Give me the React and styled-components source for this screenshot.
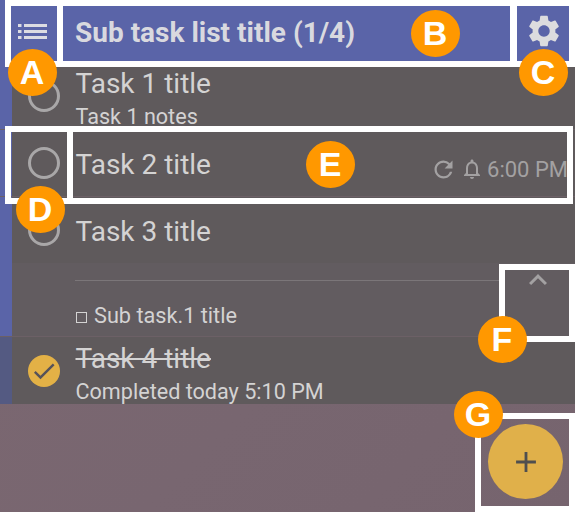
import React from "react";
import styled, { createGlobalStyle } from "styled-components";
import { MdSettings, MdRefresh, MdNotificationsNone, MdCheck, MdAdd, MdKeyboardArrowUp } from "react-icons/md";

const Global = createGlobalStyle`
  html, body { margin: 0; padding: 0; background: #786670; }
  body { font-family: Roboto, "Liberation Sans", sans-serif; }
`;

const Screen = styled.div`
  position: relative;
  width: 575px;
  height: 512px;
  overflow: hidden;
  background: linear-gradient(135deg, #7d6871 0%, #786670 60%, #76646e 100%);
  color: #dddcdc;
`;

const Header = styled.header`
  display: flex;
  align-items: center;
  height: 62px;
  background: #5a64a8;
`;

const HeaderButton = styled.div`
  display: flex;
  align-items: center;
  justify-content: center;
  flex: none;
  width: ${(p) => p.$w}px;
  height: 100%;
`;

const HeaderTitle = styled.h1`
  flex: 1;
  margin: 0;
  padding: 3px 0 0 10px;
  font-size: 28px;
  font-weight: 700;
  line-height: 59px;
  color: #d9d9df;
`;

const List = styled.div`
  display: flex;
  flex-direction: column;
`;

const Row = styled.div`
  padding: ${(p) => (p.$first ? "0" : "1px")} 0 0 12px;
  background: ${(p) => (p.$done ? "#545a82" : "#5a64a8")};
  box-shadow: ${(p) => (p.$first ? "none" : "inset 0 1px 0 #6c6066")};
`;

const RowContent = styled.div`
  background: #5f5a5c;
`;

const RowMain = styled.div`
  display: flex;
  align-items: center;
  height: ${(p) => p.$h}px;
`;

const CheckCell = styled.div`
  display: flex;
  align-items: center;
  justify-content: center;
  flex: none;
  width: 63.5px;
  height: 100%;
`;

const Circle = styled.div`
  box-sizing: border-box;
  width: 32px;
  height: 32px;
  margin-left: 1px;
  border-radius: 50%;
  border: 3px solid #a9a7a8;
`;

const CheckedCircle = styled.div`
  display: flex;
  align-items: center;
  justify-content: center;
  width: 32px;
  height: 32px;
  margin-left: 1px;
  border-radius: 50%;
  background: #e3b146;
  color: #55525a;
`;

const Body = styled.div`
  flex: 1;
  min-width: 0;
  padding-top: ${(p) => (p.$twoLine ? "8px" : "3px")};
`;

const Title = styled.div`
  font-size: 28px;
  line-height: 33px;
  color: #d4d3d3;
  text-decoration: ${(p) => (p.$done ? "line-through" : "none")};
`;

const Notes = styled.div`
  font-size: 21.6px;
  line-height: 33px;
  color: #d4d3d3;
`;

const Meta = styled.div`
  display: flex;
  align-items: center;
  flex: none;
  gap: 3px;
  margin: 12px 7px 0 0;
  font-size: 22px;
  color: #a3a1a2;
`;

const Expansion = styled.div`
  position: relative;
  box-sizing: border-box;
  height: 73px;
  padding: 17px 0 0 63px;
  background: #625c60;
`;

const Divider = styled.div`
  width: 430px;
  height: 1px;
  background: #7b7679;
`;

const SubTask = styled.div`
  display: flex;
  align-items: center;
  gap: 7px;
  margin-top: 22px;
  font-size: 21.7px;
  line-height: 26px;
  color: #d4d3d3;
`;

const SubBox = styled.span`
  box-sizing: border-box;
  width: 11px;
  height: 11px;
  margin: 3px 0 0 1px;
  border: 1.5px solid #d4d3d3;
`;

const Collapse = styled(MdKeyboardArrowUp)`
  position: absolute;
  right: 19px;
  top: -1px;
  color: #a3a1a2;
`;

const Fab = styled.button`
  position: absolute;
  left: 488px;
  top: 424px;
  display: flex;
  align-items: center;
  justify-content: center;
  width: 75px;
  height: 75px;
  padding: 0;
  border: 0;
  border-radius: 50%;
  background: #e0b04a;
  color: #4f4f4f;
`;

const Frame = styled.div`
  position: absolute;
  box-sizing: border-box;
  left: ${(p) => p.$x}px;
  top: ${(p) => p.$y}px;
  width: ${(p) => p.$w}px;
  height: ${(p) => p.$h}px;
  border: 6px solid #fff;
`;

const Badge = styled.div`
  position: absolute;
  left: ${(p) => p.$x - 24.5}px;
  top: ${(p) => p.$y - 23.5}px;
  display: flex;
  align-items: center;
  justify-content: center;
  width: 49px;
  height: 47px;
  border-radius: 50%;
  background: #ff9800;
  color: #fff;
  font-family: "Liberation Sans", Arial, sans-serif;
  font-size: 34px;
  font-weight: 700;
`;

const ListIcon = () => (
  <svg width="29" height="15" viewBox="0 0 29 15" fill="#dcdce2">
    <rect x="0" y="0" width="3.5" height="3" />
    <rect x="6" y="0" width="23" height="3" />
    <rect x="0" y="6" width="3.5" height="3" />
    <rect x="6" y="6" width="23" height="3" />
    <rect x="0" y="12" width="3.5" height="3" />
    <rect x="6" y="12" width="23" height="3" />
  </svg>
);

const frames = [
  { x: 5, y: 0, w: 58, h: 67 },
  { x: 57, y: 0, w: 460, h: 67 },
  { x: 510, y: 0, w: 65, h: 67 },
  { x: 5, y: 126, w: 68, h: 78 },
  { x: 67, y: 126, w: 506, h: 78 },
  { x: 499, y: 264, w: 76, h: 78 },
  { x: 475, y: 413, w: 100, h: 99 },
];

const badges = [
  { l: "A", x: 32, y: 72 },
  { l: "B", x: 435, y: 33 },
  { l: "C", x: 543, y: 72 },
  { l: "D", x: 40, y: 209 },
  { l: "E", x: 330, y: 164 },
  { l: "F", x: 502, y: 339 },
  { l: "G", x: 478, y: 414 },
];

export default function App() {
  return (
    <Screen>
      <Global />
      <Header>
        <HeaderButton $w={65}>
          <ListIcon />
        </HeaderButton>
        <HeaderTitle>Sub task list title (1/4)</HeaderTitle>
        <HeaderButton $w={62}>
          <MdSettings size={38} color="#dcdcde" />
        </HeaderButton>
      </Header>
      <List>
        <Row $first>
          <RowContent>
            <RowMain $h={67}>
              <CheckCell><Circle /></CheckCell>
              <Body $twoLine>
                <Title>Task 1 title</Title>
                <Notes>Task 1 notes</Notes>
              </Body>
            </RowMain>
          </RowContent>
        </Row>
        <Row>
          <RowContent>
            <RowMain $h={66}>
              <CheckCell><Circle /></CheckCell>
              <Body><Title>Task 2 title</Title></Body>
              <Meta>
                <MdRefresh size={27} />
                <MdNotificationsNone size={24} />
                <span>6:00 PM</span>
              </Meta>
            </RowMain>
          </RowContent>
        </Row>
        <Row>
          <RowContent>
            <RowMain $h={66}>
              <CheckCell><Circle /></CheckCell>
              <Body><Title>Task 3 title</Title></Body>
            </RowMain>
            <Expansion>
              <Divider />
              <SubTask><SubBox />Sub task.1 title</SubTask>
              <Collapse size={36} />
            </Expansion>
          </RowContent>
        </Row>
        <Row $done>
          <RowContent>
            <RowMain $h={67}>
              <CheckCell>
                <CheckedCircle><MdCheck size={28} /></CheckedCircle>
              </CheckCell>
              <Body $twoLine>
                <Title $done>Task 4 title</Title>
                <Notes>Completed today 5:10 PM</Notes>
              </Body>
            </RowMain>
          </RowContent>
        </Row>
      </List>
      <Fab aria-label="Add"><MdAdd size={34} /></Fab>
      {frames.map((f, i) => (
        <Frame key={i} $x={f.x} $y={f.y} $w={f.w} $h={f.h} />
      ))}
      {badges.map((b) => (
        <Badge key={b.l} $x={b.x} $y={b.y}>{b.l}</Badge>
      ))}
    </Screen>
  );
}
